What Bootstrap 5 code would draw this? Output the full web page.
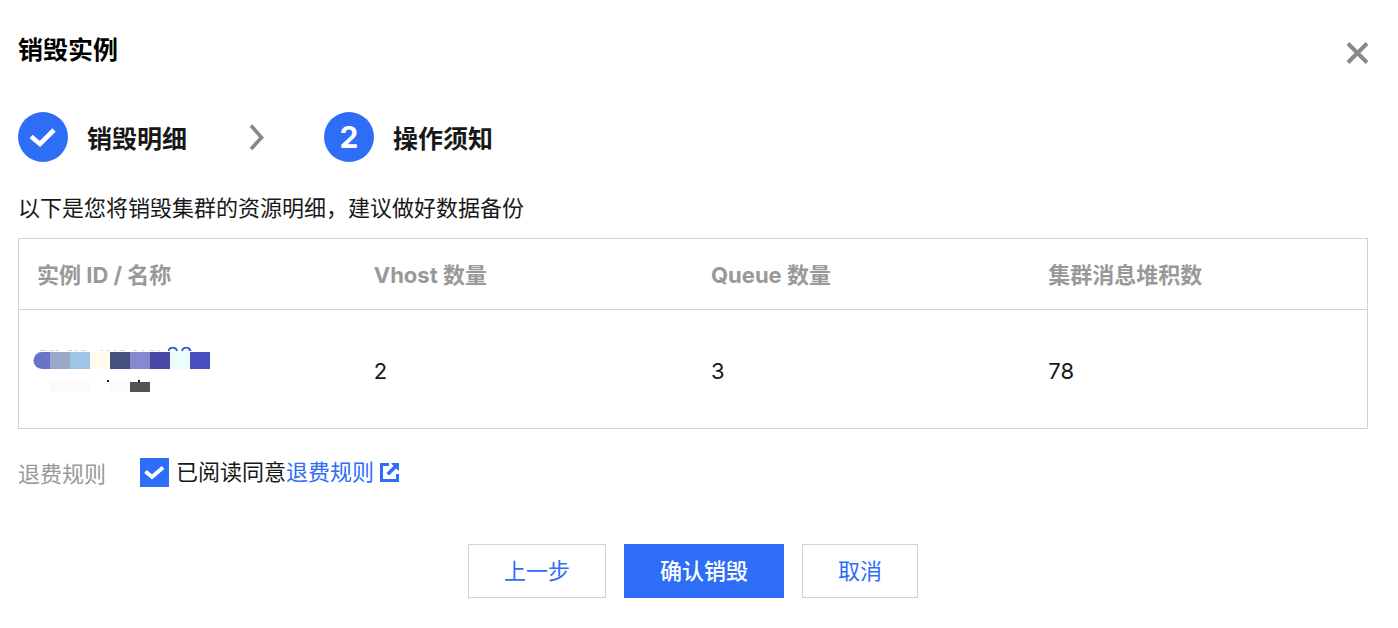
<!DOCTYPE html>
<html lang="zh-CN">
<head>
<meta charset="utf-8">
<meta name="viewport" content="width=device-width, initial-scale=1">
<title>销毁实例</title>
<link href="https://cdn.jsdelivr.net/npm/bootstrap@5.3.0/dist/css/bootstrap.min.css" rel="stylesheet">
<style>
  :root { --brand: #2e6ef7; --line: #cfd2dc; --muted: #999; }
  body { font-family: Inter, "Noto Sans CJK SC", sans-serif; font-size: 22px; line-height: 32px; color: #181818; background: #fff; }
  .dialog-body { padding: 32px 30px 30px 18px; }
  .dialog-title { font-size: 25px; line-height: 36px; font-weight: 700; color: #000; }
  .close-btn { width: 22px; height: 22px; margin-top: 10px; }
  .steps { margin-top: 44px; gap: 60px; font-size: 25px; line-height: 36px; font-weight: 700; }
  .step-item { gap: 19px; }
  .step-dot { width: 50px; height: 50px; background: var(--brand); color: #fff; font-size: 30px; }
  .step-label { padding-top: 4px; }
  .intro { margin: 30px 0 14px; }
  .detail-table { table-layout: fixed; border: 1px solid var(--line); font-size: 22px; }
  .detail-table th { color: var(--muted); font-weight: 700; padding: 20px 18px 18px; border-bottom: 1px solid var(--line); }
  .detail-table td { height: 119px; padding: 3px 18px 0; vertical-align: middle; }
  .detail-table td:first-child { padding-left: 14px; }
  .rule-row { margin-top: 27px; gap: 34px; }
  .rule-name { color: var(--muted); line-height: 36px; }
  .agree-box.form-check-input { width: 29px; height: 29px; margin: 0 7px 0 0; border: 0; border-radius: 0; }
  .agree-box.form-check-input:checked { background-color: var(--brand); background-size: 29px 29px; background-image: url("data:image/svg+xml,%3Csvg xmlns='http://www.w3.org/2000/svg' viewBox='0 0 29 29'%3E%3Cpath d='M5.500 13.500L12 19 23 9.500' fill='none' stroke='white' stroke-width='3.800'/%3E%3C/svg%3E"); }
  .rule-link { color: var(--brand); gap: 6px; }
  .actions { margin-top: 52px; gap: 18px; }
  .act-btn { --bs-btn-padding-x: 35px; --bs-btn-padding-y: 10px; --bs-btn-font-size: 22px; --bs-btn-line-height: 32px; --bs-btn-border-radius: 0;
    --bs-btn-color: var(--brand); --bs-btn-bg: #fff; --bs-btn-border-color: var(--line); --bs-btn-hover-color: var(--brand); --bs-btn-hover-border-color: var(--brand); }
  .act-main { --bs-btn-color: #fff; --bs-btn-bg: var(--brand); --bs-btn-border-color: var(--brand); --bs-btn-hover-color: #fff; --bs-btn-hover-bg: var(--brand); font-weight: 500; }
</style>
</head>
<body>
<main class="dialog-body">
  <header class="d-flex justify-content-between align-items-start">
    <h1 class="dialog-title mb-0">销毁实例</h1>
    <button type="button" class="close-btn btn border-0 p-0 d-flex" aria-label="关闭">
      <svg width="22" height="22" viewBox="0 0 22 22" aria-hidden="true"><path d="M2 1.500l19 19M21 1.500l-19 19" stroke="#888" stroke-width="4"/></svg>
    </button>
  </header>

  <ol class="steps list-unstyled d-flex align-items-center mb-0">
    <li class="step-item d-flex align-items-center">
      <span class="step-dot rounded-circle d-flex align-items-center justify-content-center">
        <svg width="50" height="50" viewBox="0 0 50 50" aria-hidden="true"><path d="M13 24.500l9 7.500L36 18" fill="none" stroke="#fff" stroke-width="4.600"/></svg>
      </span>
      <span class="step-label">销毁明细</span>
    </li>
    <li class="d-flex" aria-hidden="true">
      <svg width="17" height="26" viewBox="0 0 17 26"><path d="M4 1.500L14.500 13.500 4 25" fill="none" stroke="#888" stroke-width="3.600"/></svg>
    </li>
    <li class="step-item d-flex align-items-center" aria-current="step">
      <span class="step-dot rounded-circle d-flex align-items-center justify-content-center">2</span>
      <span class="step-label">操作须知</span>
    </li>
  </ol>

  <p class="intro">以下是您将销毁集群的资源明细，建议做好数据备份</p>

  <table class="detail-table w-100">
    <thead>
      <tr><th scope="col">实例 ID / 名称</th><th scope="col">Vhost 数量</th><th scope="col">Queue 数量</th><th scope="col">集群消息堆积数</th></tr>
    </thead>
    <tbody>
      <tr>
        <td>
          <svg class="d-block" width="178" height="48" viewBox="0 0 178 48" role="img" aria-label="已隐藏的实例">
            <path d="M7 3.500h6m4 0h4m2 0h3m9 0h4m3 0h3m3 0h5m15 0h2m3 0h3m5 0h2m4 0h5m8 0h4m5 0h2m6 0h4m3 0h3m27 0h5" stroke="#c3d1f5" fill="none"/>
            <path d="M135.500 4c1-4.500 7.500-4.500 8.500 0M149 4c1-4.500 7.500-4.500 8.500 0" stroke="#2657dc" stroke-width="1.800" fill="none"/>
            <path d="M17 5H9a8.500 8.500 0 0 0 0 17h8z" fill="#6b72ca"/>
            <path d="M17 5h20v17H17z" fill="#9baac8"/>
            <path d="M37 5h20v17H37z" fill="#9dc5e6"/>
            <path d="M57 5h20v17H57z" fill="#fffcee"/>
            <path d="M77 5h20v17H77z" fill="#44517e"/>
            <path d="M97 5h20v17H97z" fill="#8789ce"/>
            <path d="M117 5h20v17h-20z" fill="#4a49a6"/>
            <path d="M137 5h20v17h-20z" fill="#ecfdff"/>
            <path d="M157 5h20v17h-20z" fill="#4850bf"/>
            <path d="M17 35h40v10H17zM77 35h20v10H77z" fill="#fbfbfb"/>
            <path d="M97 35h20v10H97z" fill="#535353"/>
            <path d="M74 33h2v2h-2zM105 33h2v2h-2z" fill="#181818"/>
          </svg>
        </td>
        <td>2</td><td>3</td><td>78</td>
      </tr>
    </tbody>
  </table>

  <div class="rule-row d-flex align-items-start">
    <span class="rule-name">退费规则</span>
    <div class="d-flex align-items-center">
      <input class="agree-box form-check-input" type="checkbox" id="agree" checked>
      <label for="agree">已阅读同意</label>
      <a class="rule-link d-flex align-items-center text-decoration-none" href="#rules">退费规则
        <svg width="19" height="19" viewBox="0 0 19 19" aria-hidden="true"><path d="M9 0H0v19h19v-8h-3v5H3V3h6z" fill="currentColor"/><path d="M11 0h8v8l-3-2.500-7 7L6.500 10l7-7z" fill="currentColor"/></svg>
      </a>
    </div>
  </div>

  <div class="actions d-flex justify-content-center">
    <button type="button" class="btn act-btn">上一步</button>
    <button type="button" class="btn act-btn act-main">确认销毁</button>
    <button type="button" class="btn act-btn">取消</button>
  </div>
</main>
<script src="https://cdn.jsdelivr.net/npm/bootstrap@5.3.0/dist/js/bootstrap.bundle.min.js"></script>
</body>
</html>
